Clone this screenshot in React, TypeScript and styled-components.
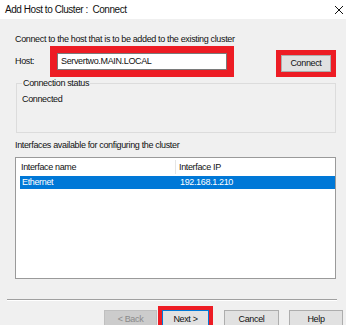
import React from 'react';
import styled, { createGlobalStyle } from 'styled-components';

const GlobalStyle = createGlobalStyle`
  html, body {
    margin: 0;
    padding: 0;
    background: #f0f0f0;
  }
`;

const Window = styled.div`
  width: 346px;
  height: 325px;
  overflow: hidden;
  background: #f0f0f0;
  font-family: 'Liberation Sans', Arial, sans-serif;
  font-size: 9px;
  line-height: 11px;
  letter-spacing: -0.35px;
  color: #111;
`;

const TitleBar = styled.div`
  height: 19px;
  background: #fff;
  display: flex;
  align-items: center;
  justify-content: space-between;
  padding: 0 2px 0 5px;
  font-size: 10px;
  letter-spacing: -0.45px;
`;

const Body = styled.div`
  padding: 0 10px 0 15px;
`;

const Text = styled.div<{ $top?: number }>`
  margin-top: ${(p) => p.$top ?? 0}px;
  white-space: nowrap;
`;

const HostRow = styled.div`
  display: flex;
  align-items: flex-start;
  margin-top: 1px;
`;

const HostLabel = styled.div`
  width: 35px;
  margin-top: 10px;
`;

const Spacer = styled.div`
  flex: 1;
`;

const Highlight = styled.div<{ $w: number; $top?: number; $left?: number }>`
  border: ${(p) => p.$w}px solid #ed1c24;
  margin-top: ${(p) => p.$top ?? 0}px;
  margin-left: ${(p) => p.$left ?? 0}px;
  display: flex;
`;

const Input = styled.div`
  width: 170px;
  height: 17px;
  box-sizing: border-box;
  border: 1px solid #7a7a7a;
  background: #fff;
  padding: 2px 3px 0;
`;

const Button = styled.div<{ $w: number; $disabled?: boolean; $default?: boolean }>`
  width: ${(p) => p.$w}px;
  height: 17px;
  box-sizing: border-box;
  display: flex;
  align-items: center;
  justify-content: center;
  background: ${(p) => (p.$disabled ? '#cccccc' : '#e1e1e1')};
  border: 1px solid ${(p) => (p.$disabled ? '#bfbfbf' : p.$default ? '#0078d7' : '#adadad')};
  color: ${(p) => (p.$disabled ? '#8a8a8a' : '#111')};
`;

const FooterButton = styled(Button)<{ $left?: number; $top?: number }>`
  height: 23px;
  margin-left: ${(p) => p.$left ?? 0}px;
  margin-top: ${(p) => p.$top ?? 0}px;
  align-items: flex-start;
  padding-top: 3px;
`;

const Group = styled.div`
  margin: 6px 0 0 1px;
  height: 50px;
  box-sizing: border-box;
  border: 1px solid #dcdcdc;
  padding-left: 5px;
`;

const Legend = styled.div`
  margin-top: -6px;
  width: fit-content;
  background: #f0f0f0;
  padding: 0 1px;
`;

const List = styled.div`
  margin-top: 6px;
  height: 122px;
  box-sizing: border-box;
  border: 1px solid #9a9a9a;
  background: #fff;
`;

const HeaderRow = styled.div`
  display: flex;
  height: 18px;
  align-items: center;
`;

const HeaderCell = styled.div<{ $w?: number }>`
  width: ${(p) => (p.$w ? `${p.$w}px` : 'auto')};
  flex: ${(p) => (p.$w ? 'none' : 1)};
  box-sizing: border-box;
  padding-left: ${(p) => (p.$w ? 5 : 3)}px;
  height: 14px;
  display: flex;
  align-items: center;
  border-right: ${(p) => (p.$w ? '1px solid #e5e5e5' : 'none')};
`;

const DataRow = styled.div<{ $selected?: boolean }>`
  display: flex;
  height: 13px;
  align-items: center;
  margin-left: 4px;
  background: ${(p) => (p.$selected ? '#0078d7' : 'transparent')};
  color: ${(p) => (p.$selected ? '#fff' : '#111')};
`;

const DataCell = styled.div<{ $w?: number }>`
  width: ${(p) => (p.$w ? `${p.$w}px` : 'auto')};
  flex: ${(p) => (p.$w ? 'none' : 1)};
  padding-left: ${(p) => (p.$w ? 2 : 4)}px;
  box-sizing: border-box;
`;

const Separator = styled.div`
  margin: 20px -1px 0 -8px;
  height: 1px;
  background: #a0a0a0;
  border-bottom: 1px solid #fff;
`;

const Footer = styled.div`
  display: flex;
  align-items: flex-start;
  justify-content: flex-end;
  margin: 5px -7px 0 0;
`;

const CloseIcon = () => (
  <svg width="10" height="10" viewBox="0 0 10 10">
    <path d="M1 1 L9 9 M9 1 L1 9" stroke="#111" strokeWidth="1" />
  </svg>
);

export default function App() {
  return (
    <Window>
      <GlobalStyle />
      <TitleBar>
        <span>Add Host to Cluster :&nbsp; Connect</span>
        <CloseIcon />
      </TitleBar>
      <Body>
        <Text $top={15}>Connect to the host that is to be added to the existing cluster</Text>
        <HostRow>
          <HostLabel>Host:</HostLabel>
          <Highlight $w={7}>
            <Input>Servertwo.MAIN.LOCAL</Input>
          </Highlight>
          <Spacer />
          <Highlight $w={5} $top={4}>
            <Button $w={50}>Connect</Button>
          </Highlight>
        </HostRow>
        <Group>
          <Legend>Connection status</Legend>
          <Text $top={5}>Connected</Text>
        </Group>
        <Text $top={7}>Interfaces available for configuring the cluster</Text>
        <List>
          <HeaderRow>
            <HeaderCell $w={160}>Interface name</HeaderCell>
            <HeaderCell>Interface IP</HeaderCell>
          </HeaderRow>
          <DataRow $selected>
            <DataCell $w={156}>Ethernet</DataCell>
            <DataCell>192.168.1.210</DataCell>
          </DataRow>
        </List>
        <Separator />
        <Footer>
          <FooterButton $w={53} $top={4} $disabled>
            &lt; Back
          </FooterButton>
          <Highlight $w={4} $left={1}>
            <FooterButton $w={47} $default>
              Next &gt;
            </FooterButton>
          </Highlight>
          <FooterButton $w={55} $top={4} $left={11}>
            Cancel
          </FooterButton>
          <FooterButton $w={54} $top={4} $left={10}>
            Help
          </FooterButton>
        </Footer>
      </Body>
    </Window>
  );
}
